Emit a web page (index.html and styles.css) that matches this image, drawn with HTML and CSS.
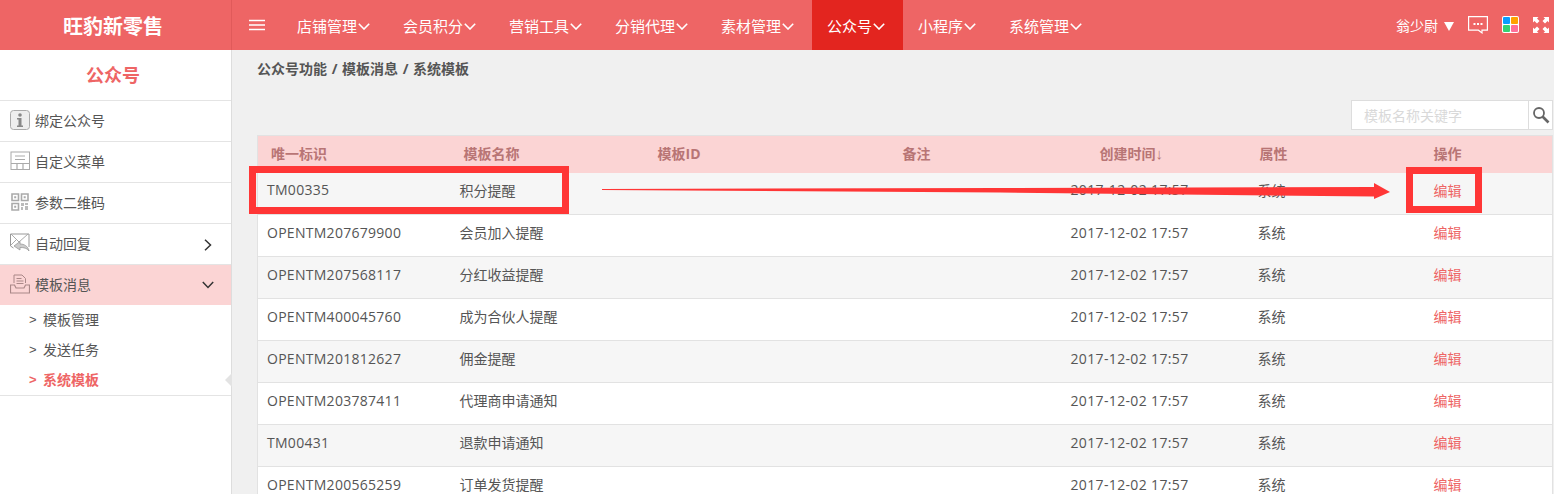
FILE: index.html
```html
<!DOCTYPE html>
<html lang="zh">
<head>
<meta charset="utf-8">
<title>系统模板</title>
<link rel="stylesheet" href="styles.css">
</head>
<body>
<header class="topbar">
  <div class="logo">旺豹新零售</div>
  <div class="burger"><svg width="16" height="12" viewBox="0 0 16 12"><path d="M0 1.500h16M0 6h16M0 10.500h16" stroke="#fff" stroke-width="1.600"/></svg></div>
  <nav class="nav">
    <a class="nav-item">店铺管理<svg class="chev" viewBox="0 0 12 7"><path d="M.8.8L6 6l5.200-5.200" fill="none" stroke="#fff" stroke-width="1.600"/></svg></a>
    <a class="nav-item">会员积分<svg class="chev" viewBox="0 0 12 7"><path d="M.8.8L6 6l5.200-5.200" fill="none" stroke="#fff" stroke-width="1.600"/></svg></a>
    <a class="nav-item">营销工具<svg class="chev" viewBox="0 0 12 7"><path d="M.8.8L6 6l5.200-5.200" fill="none" stroke="#fff" stroke-width="1.600"/></svg></a>
    <a class="nav-item">分销代理<svg class="chev" viewBox="0 0 12 7"><path d="M.8.8L6 6l5.200-5.200" fill="none" stroke="#fff" stroke-width="1.600"/></svg></a>
    <a class="nav-item">素材管理<svg class="chev" viewBox="0 0 12 7"><path d="M.8.8L6 6l5.200-5.200" fill="none" stroke="#fff" stroke-width="1.600"/></svg></a>
    <a class="nav-item active">公众号<svg class="chev" viewBox="0 0 12 7"><path d="M.8.8L6 6l5.200-5.200" fill="none" stroke="#fff" stroke-width="1.600"/></svg></a>
    <a class="nav-item">小程序<svg class="chev" viewBox="0 0 12 7"><path d="M.8.8L6 6l5.200-5.200" fill="none" stroke="#fff" stroke-width="1.600"/></svg></a>
    <a class="nav-item">系统管理<svg class="chev" viewBox="0 0 12 7"><path d="M.8.8L6 6l5.200-5.200" fill="none" stroke="#fff" stroke-width="1.600"/></svg></a>
  </nav>
  <div class="user">
    <span class="user-name">翁少尉</span>
    <span class="user-caret"></span>
    <svg class="msg" width="20" height="18" viewBox="0 0 20 18"><path d="M.6.6h18.800v13.600h-5.400v2.700l-3.600-2.700H.6z" fill="none" stroke="#fff" stroke-width="1.200"/><path d="M5.500 7h2v2h-2zM9 7h2v2H9zM12.500 7h2v2h-2z" fill="#fff"/></svg>
    <svg class="apps" width="17" height="17" viewBox="0 0 17 17"><rect width="17" height="17" rx="2" fill="#fff"/><rect x="1" y="1" width="7" height="7" rx="1" fill="#0a9cff"/><rect x="9" y="1" width="7" height="7" rx="1" fill="#ffa200"/><rect x="1" y="9" width="7" height="7" rx="1" fill="#35d173"/><rect x="9" y="9" width="7" height="7" rx="1" fill="#ff6f98"/></svg>
    <svg class="full" width="16" height="16" viewBox="0 0 16 16"><path d="M0 0h5.500L4 1.500 6.500 4 4 6.500 1.500 4 0 5.500zM16 0v5.500L14.500 4 12 6.500 9.500 4 12 1.500 10.500 0zM0 16v-5.500L1.500 12 4 9.500 6.500 12 4 14.500 5.500 16zM16 16h-5.500l1.500-1.500L9.500 12l2.500-2.500 2.500 2.500 1.500-1.500z" fill="#fff"/></svg>
  </div>
</header>

<div class="body">
  <aside class="side">
    <h2 class="side-title">公众号</h2>
    <ul class="menu">
      <li class="menu-row">
        <svg class="mi" width="20" height="20" viewBox="0 0 20 20"><rect x=".5" y=".5" width="19" height="19" rx="3" fill="#eee" stroke="#aaa"/><circle cx="10" cy="5" r="1.800" fill="#888"/><path d="M7 8h4.500v7.500H13V17H7v-1.500h1.500V9.500H7z" fill="#888"/></svg>
        <span>绑定公众号</span>
      </li>
      <li class="menu-row">
        <svg class="mi" width="20" height="20" viewBox="0 0 20 20"><rect x="1" y="1" width="18.500" height="17.500" fill="none" stroke="#aaa"/><path d="M5 5h10M5 8.500h10" stroke="#aaa"/><path d="M1 12.500h18M7 13v5M13 13v5" stroke="#aaa" stroke-width="1.200"/></svg>
        <span>自定义菜单</span>
      </li>
      <li class="menu-row">
        <svg class="mi" width="20" height="20" viewBox="0 0 20 20"><path d="M2 2h6.500v6.500H2zM11.500 2H18v6.500h-6.500zM2 11.500h6.500V18H2z" fill="none" stroke="#aaa" stroke-width="1.600"/><path d="M4.200 4.200h2v2h-2zM13.700 4.200h2v2h-2zM4.200 13.700h2v2h-2z" fill="#aaa"/><path d="M11 11h3v3h-3zM15 11h3v2h-3zM11 15h2v3h-2zM15 14h3v4h-3z" fill="#bbb"/></svg>
        <span>参数二维码</span>
      </li>
      <li class="menu-row">
        <svg class="mi" width="20" height="20" viewBox="0 0 20 20"><path d="M.5 1h18.500v13" fill="none" stroke="#999"/><path d="M.5 1v12l3 2" fill="none" stroke="#999"/><path d="M1 1l8 8 9-8M1 12l6-6" fill="none" stroke="#aaa"/><path d="M4 13l6-4.500v2.500c4 0 8 2 9 7-2-3-5-3.500-9-3.500V17z" fill="#ccc" stroke="#999" stroke-width=".8"/></svg>
        <span>自动回复</span>
        <svg class="row-arrow" width="8" height="12" viewBox="0 0 8 12"><path d="M1 .8L6.500 6 1 11.200" fill="none" stroke="#333" stroke-width="1.500"/></svg>
      </li>
      <li class="menu-row current">
        <svg class="mi" width="20" height="20" viewBox="0 0 20 20"><path d="M4 9V1h8l3.500 3.500V9" fill="none" stroke="#a88"/><path d="M6.500 4.500h5M6.500 7h7M6.500 9.500h7" stroke="#a88"/><path d="M.5 11h4l1.500 3h8l1.500-3h4v8H.5z" fill="none" stroke="#a88" stroke-width="1.200"/></svg>
        <span>模板消息</span>
        <svg class="row-arrow down" width="12" height="8" viewBox="0 0 12 8"><path d="M.8 1L6 6.500 11.200 1" fill="none" stroke="#333" stroke-width="1.500"/></svg>
      </li>
    </ul>
    <ul class="submenu">
      <li class="sub-row"><i>&gt;</i>模板管理</li>
      <li class="sub-row"><i>&gt;</i>发送任务</li>
      <li class="sub-row on"><i>&gt;</i>系统模板<b class="notch"></b></li>
    </ul>
  </aside>

  <main class="main">
    <div class="crumbs">公众号功能 / 模板消息 / 系统模板</div>
    <div class="tools">
      <div class="search">
        <span class="search-input">模板名称关键字</span>
        <span class="search-btn"><svg width="18" height="18" viewBox="0 0 18 18"><circle cx="7" cy="7" r="5" fill="none" stroke="#666" stroke-width="1.800"/><path d="M10.500 10.500L16.500 16.500" stroke="#666" stroke-width="2.600"/></svg></span>
      </div>
    </div>
    <table class="grid">
      <colgroup><col class="c1"><col class="c2"><col class="c3"><col class="c4"><col class="c5"><col class="c6"><col class="c7"></colgroup>
      <thead>
        <tr><th>唯一标识</th><th>模板名称</th><th>模板ID</th><th class="th-note">备注</th><th class="th-time">创建时间<span class="sort">↓</span></th><th class="th-attr">属性</th><th class="th-op">操作</th></tr>
      </thead>
      <tbody>
        <tr><td>TM00335</td><td>积分提醒</td><td></td><td></td><td>2017-12-02 17:57</td><td>系统</td><td class="op">编辑</td></tr>
        <tr><td>OPENTM207679900</td><td>会员加入提醒</td><td></td><td></td><td>2017-12-02 17:57</td><td>系统</td><td class="op">编辑</td></tr>
        <tr><td>OPENTM207568117</td><td>分红收益提醒</td><td></td><td></td><td>2017-12-02 17:57</td><td>系统</td><td class="op">编辑</td></tr>
        <tr><td>OPENTM400045760</td><td>成为合伙人提醒</td><td></td><td></td><td>2017-12-02 17:57</td><td>系统</td><td class="op">编辑</td></tr>
        <tr><td>OPENTM201812627</td><td>佣金提醒</td><td></td><td></td><td>2017-12-02 17:57</td><td>系统</td><td class="op">编辑</td></tr>
        <tr><td>OPENTM203787411</td><td>代理商申请通知</td><td></td><td></td><td>2017-12-02 17:57</td><td>系统</td><td class="op">编辑</td></tr>
        <tr><td>TM00431</td><td>退款申请通知</td><td></td><td></td><td>2017-12-02 17:57</td><td>系统</td><td class="op">编辑</td></tr>
        <tr><td>OPENTM200565259</td><td>订单发货提醒</td><td></td><td></td><td>2017-12-02 17:57</td><td>系统</td><td class="op">编辑</td></tr>
      </tbody>
    </table>
  </main>
</div>

<svg class="marks" width="1554" height="494" viewBox="0 0 1554 494">
  <rect x="252.500" y="169.500" width="313" height="41" fill="none" stroke="#ff3636" stroke-width="7"/>
  <rect x="1409.500" y="170.500" width="69" height="39" fill="none" stroke="#ff3636" stroke-width="7"/>
  <path d="M602 189L1000 188L1374 187V183L1390 192L1374 199V196.500L1000 192.500L602 190Z" fill="#ff3636"/>
</svg>
</body>
</html>
```
FILE: styles.css
```css
* { box-sizing: border-box; }
html, body { margin: 0; height: 494px; overflow: hidden; }
body {
  font-family: "Open Sans", "Noto Sans CJK SC", sans-serif;
  font-size: 14px;
  color: #555;
  background: #f0f0f0;
}
ul { list-style: none; margin: 0; padding: 0; }

.topbar { display: flex; align-items: stretch; height: 50px; background: #ee6565; color: #fff; }
.logo {
  width: 232px; padding-right: 5px; border-right: 1px solid #e05a5a;
  display: flex; align-items: center; justify-content: center;
  font-size: 20px; font-weight: 700;
}
.burger { width: 50px; display: flex; align-items: center; padding-left: 17px; }
.nav { display: flex; flex: 1; }
.nav-item { display: flex; align-items: center; padding: 0 15px; white-space: nowrap; color: #fff; font-size: 15px; }
.nav-item.active { background: #e3251f; }
.chev { width: 12px; height: 7px; margin: 3px 3px 0 1px; }
.user { display: flex; align-items: center; padding-right: 5px; }
.user-name { font-size: 14px; margin-right: 1px; }
.user-caret {
  width: 0; height: 0; margin: 2px 0 0 5px;
  border-left: 5.500px solid transparent; border-right: 5.500px solid transparent; border-top: 9px solid #fff;
}
.msg { margin-left: 14px; }
.apps { margin-left: 14px; margin-top: -1px; }
.full { margin-left: 14px; }

.body { display: flex; height: 444px; }
.side { width: 232px; flex: none; background: #fff; border-right: 1px solid #ddd; }
.side-title {
  margin: 0; height: 51px; padding: 0 5px 2px 0; border-bottom: 1px solid #e4e4e4;
  display: flex; align-items: center; justify-content: center;
  font-size: 18px; font-weight: 700; color: #ee6565;
}
.menu-row {
  position: relative; display: flex; align-items: center;
  height: 41px; padding: 0 0 2px 10px; border-bottom: 1px solid #e4e4e4;
  color: #555;
}
.menu-row.current { background: #fbd4d4; border-bottom: 0; height: 40px; }
.mi { flex: none; margin-right: 5px; }
.row-arrow { position: absolute; right: 19px; top: 15px; }
.row-arrow.down { right: 17px; top: 16px; }
.submenu { height: 91px; border-bottom: 1px solid #e4e4e4; }
.sub-row { position: relative; height: 30px; display: flex; align-items: center; padding: 0 0 2px 29px; font-size: 14px; color: #555; }
.sub-row i { font-style: normal; width: 14px; font-family: "Liberation Sans", sans-serif; font-size: 13px; }
.sub-row.on { color: #ee6565; font-weight: 700; }
.notch {
  position: absolute; right: -1px; top: 8px; width: 0; height: 0;
  border-top: 7px solid transparent; border-bottom: 7px solid transparent; border-right: 7px solid #e3e3e3;
}

.main { flex: 1; padding: 0 1px 0 25px; min-width: 0; }
.crumbs { height: 40px; line-height: 38px; font-size: 14px; font-weight: 700; color: #555; word-spacing: 1px; }
.tools { height: 45px; display: flex; justify-content: flex-end; padding-top: 10px; }
.search { display: flex; height: 30px; background: #fff; border: 1px solid #ddd; }
.search-input { width: 177px; padding-left: 12px; line-height: 29px; color: #d9d9d9; font-size: 14px; border-right: 1px solid #ddd; }
.search-btn { width: 23px; display: flex; align-items: center; justify-content: center; }

.grid { width: 1295px; table-layout: fixed; border-collapse: collapse; border-left: 1px solid #e2e2e2; border-right: 1px solid #e2e2e2; }
.c1 { width: 193px; } .c2 { width: 194px; } .c3 { width: 245px; } .c4 { width: 171px; }
.c5 { width: 188px; } .c6 { width: 175px; } .c7 { width: 129px; }
.grid th {
  height: 37px; padding: 0 0 2px 13px; text-align: left; font-size: 14px; font-weight: 700;
  background: #fbd4d4; color: #b87575; border-top: 1px solid #e2e2e2;
}
.grid th.th-time { padding-left: 39px; }
.grid th.th-attr { padding-left: 11px; }
.grid th.th-op { padding-left: 10px; }
.sort { font-family: "Liberation Sans", sans-serif; font-weight: 700; font-size: 15px; }
.grid td { height: 42px; padding: 0 0 7px 9px; border-bottom: 1px solid #e2e2e2; color: #555; white-space: nowrap; letter-spacing: .28px; }
.grid td:nth-child(2) { padding-left: 9px; letter-spacing: 0; }
.grid td:nth-child(5) { padding-left: 10px; letter-spacing: .35px; }
.grid td:nth-child(6) { letter-spacing: 0; padding-left: 9px; }
.grid td.op { padding-left: 10px; letter-spacing: 0; color: #ee6565; }
.grid tbody tr:nth-child(odd) td { background: #f6f6f6; }
.grid tbody tr:nth-child(even) td { background: #fff; }

.marks { position: absolute; left: 0; top: 0; pointer-events: none; }
```
